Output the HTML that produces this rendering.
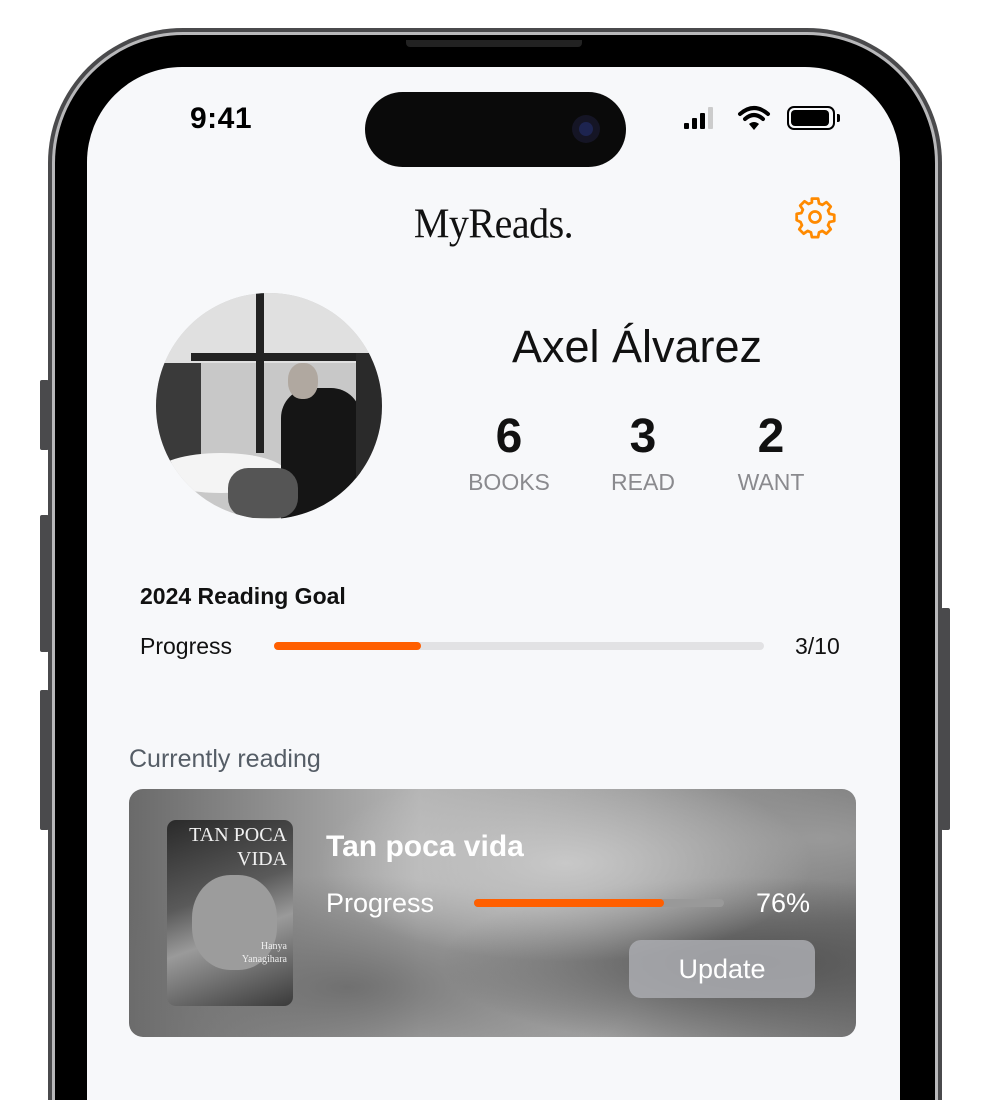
<!DOCTYPE html>
<html><head><meta charset="utf-8"><style>
*{margin:0;padding:0;box-sizing:border-box}
html,body{width:990px;height:1100px;overflow:hidden;background:#fff}
body{font-family:"Liberation Sans",sans-serif}
#wrap{position:relative;width:990px;height:1100px;overflow:hidden}
.abs{position:absolute}
.frame{left:48px;top:28px;width:894px;height:1072px;border-radius:135px 135px 0 0;background:#4a4a4c;}
.frame2{left:52px;top:32px;width:886px;height:1068px;border-radius:131px 131px 0 0;background:#b8b8ba;}
.frame3{left:55px;top:35px;width:880px;height:1065px;border-radius:128px 128px 0 0;background:#000;}
.screen{left:87px;top:67px;width:813px;height:1033px;border-radius:95px 95px 0 0;background:#f7f8fa;overflow:hidden}
.btn{background:#4a4a4c;border-radius:2px}
</style></head><body><div id="wrap">
<div class="abs btn" style="left:40px;top:380px;width:9px;height:70px"></div>
<div class="abs btn" style="left:40px;top:515px;width:9px;height:137px"></div>
<div class="abs btn" style="left:40px;top:690px;width:9px;height:140px"></div>
<div class="abs btn" style="left:941px;top:608px;width:9px;height:222px"></div>
<div class="abs frame"></div>
<div class="abs frame2"></div>
<div class="abs frame3"></div>
<div class="abs" style="left:406px;top:40px;width:176px;height:7px;background:#222;border-radius:0 0 4px 4px"></div>
<div class="abs screen">
  <div class="abs" style="left:103px;top:35px;font-size:30px;font-weight:bold;color:#000;letter-spacing:0.5px">9:41</div>
  <div class="abs" style="left:278px;top:25px;width:261px;height:75px;background:#0a0a0a;border-radius:38px">
    <div class="abs" style="left:207px;top:23px;width:28px;height:28px;border-radius:50%;background:#151525"><div class="abs" style="left:7px;top:7px;width:14px;height:14px;border-radius:50%;background:#1d2450"></div></div>
  </div>
  <div class="abs" style="left:597px;top:56px;width:5px;height:6px;background:#000;border-radius:1px"></div>
  <div class="abs" style="left:605px;top:51px;width:5px;height:11px;background:#000;border-radius:1px"></div>
  <div class="abs" style="left:613px;top:46px;width:5px;height:16px;background:#000;border-radius:1px"></div>
  <div class="abs" style="left:621px;top:40px;width:5px;height:22px;background:#ccc;border-radius:1px"></div>
  <svg class="abs" style="left:650px;top:38px" width="34" height="26" viewBox="0 0 34 26"><path d="M3 9 Q17 -3 31 9" stroke="#000" stroke-width="4" fill="none" stroke-linecap="round"/><path d="M8 14 Q17 6 26 14" stroke="#000" stroke-width="4" fill="none" stroke-linecap="round"/><path d="M12 19 L17 25 L22 19 Q17 15 12 19Z" fill="#000"/></svg>
  <div class="abs" style="left:700px;top:39px;width:48px;height:24px;border:2px solid #000;border-radius:7px"><div class="abs" style="left:2px;top:2px;width:38px;height:16px;background:#000;border-radius:4px"></div></div>
  <div class="abs" style="left:750px;top:47px;width:3px;height:8px;background:#000;border-radius:0 2px 2px 0"></div>
  <div class="abs" style="left:0;width:813px;top:133px;text-align:center;font-family:'Liberation Serif',serif;font-size:40px;color:#111;letter-spacing:-0.5px;transform:scaleY(1.05)">MyReads.</div>
  <svg class="abs" style="left:706px;top:128px" width="44" height="44" viewBox="0 0 24 24" fill="none" stroke="#ff8a00" stroke-width="1.5" stroke-linejoin="round"><path d="M10.3 2h3.4l.5 2.6 1.8.8 2.2-1.5 2.4 2.4-1.5 2.2.8 1.8 2.6.5v3.4l-2.6.5-.8 1.8 1.5 2.2-2.4 2.4-2.2-1.5-1.8.8-.5 2.6h-3.4l-.5-2.6-1.8-.8-2.2 1.5-2.4-2.4 1.5-2.2-.8-1.8L2 13.7v-3.4l2.6-.5.8-1.8-1.5-2.2 2.4-2.4 2.2 1.5 1.8-.8z"/><circle cx="12" cy="12" r="3"/></svg>
  <div class="abs" style="left:69px;top:226px;width:226px;height:226px;border-radius:50%;overflow:hidden;background:#c8c8c8">
    <div class="abs" style="left:0;top:0;width:226px;height:70px;background:#e0e0e0"></div>
    <div class="abs" style="left:35px;top:60px;width:180px;height:8px;background:#222"></div>
    <div class="abs" style="left:100px;top:0;width:8px;height:160px;background:#222"></div>
    <div class="abs" style="left:0;top:70px;width:45px;height:100px;background:#3a3a3a"></div>
    <div class="abs" style="left:0;top:160px;width:130px;height:40px;background:#f4f4f4;border-radius:50%"></div>
    <div class="abs" style="left:125px;top:95px;width:80px;height:140px;background:#151515;border-radius:30px 30px 0 0"></div>
    <div class="abs" style="left:132px;top:70px;width:30px;height:36px;background:#b0a8a0;border-radius:45%"></div>
    <div class="abs" style="left:72px;top:175px;width:70px;height:50px;background:#555;border-radius:20px"></div>
    <div class="abs" style="left:200px;top:60px;width:26px;height:150px;background:#2a2a2a"></div>
  </div>
  <div class="abs" style="left:380px;top:254px;width:340px;text-align:center;font-size:45px;color:#111">Axel Álvarez</div>
  <div class="abs" style="left:362px;top:342px;width:120px;text-align:center;font-size:48px;font-weight:bold;color:#111">6</div>
  <div class="abs" style="left:496px;top:342px;width:120px;text-align:center;font-size:48px;font-weight:bold;color:#111">3</div>
  <div class="abs" style="left:624px;top:342px;width:120px;text-align:center;font-size:48px;font-weight:bold;color:#111">2</div>
  <div class="abs" style="left:362px;top:402px;width:120px;text-align:center;font-size:23px;color:#8a8a8e">BOOKS</div>
  <div class="abs" style="left:496px;top:402px;width:120px;text-align:center;font-size:23px;color:#8a8a8e">READ</div>
  <div class="abs" style="left:624px;top:402px;width:120px;text-align:center;font-size:23px;color:#8a8a8e">WANT</div>
  <div class="abs" style="left:53px;top:516px;font-size:23px;font-weight:bold;color:#111">2024 Reading Goal</div>
  <div class="abs" style="left:53px;top:566px;font-size:23px;color:#111">Progress</div>
  <div class="abs" style="left:187px;top:575px;width:490px;height:8px;background:#e2e2e4;border-radius:4px"><div style="width:147px;height:8px;background:#ff5f00;border-radius:4px"></div></div>
  <div class="abs" style="left:708px;top:566px;font-size:23px;color:#111">3/10</div>
  <div class="abs" style="left:42px;top:678px;font-size:25px;color:#555d66">Currently reading</div>
  <div class="abs" style="left:42px;top:722px;width:727px;height:248px;border-radius:14px;overflow:hidden;background:radial-gradient(ellipse at 60% 30%,#c8c8c8,transparent 40%),radial-gradient(ellipse at 85% 70%,#505050,transparent 35%),radial-gradient(ellipse at 30% 80%,#707070,transparent 40%),radial-gradient(ellipse at 95% 20%,#999,transparent 30%),linear-gradient(90deg,#6a6a6a,#b5b5b5 40%,#9a9a9a 70%,#777)">
    <div class="abs" style="left:38px;top:31px;width:126px;height:186px;border-radius:9px;background:linear-gradient(160deg,#2a2a2a,#5a5a5a 40%,#9a9a9a 60%,#3a3a3a);overflow:hidden">
      <div class="abs" style="left:25px;top:55px;width:85px;height:95px;border-radius:45%;background:#9c9c9c"></div>
      <div class="abs" style="left:10px;top:3px;width:110px;text-align:right;font-family:'Liberation Serif',serif;color:#f0f0f0;font-size:20px;line-height:24px">TAN POCA<br>VIDA</div>
      <div class="abs" style="left:60px;top:120px;width:60px;text-align:right;font-family:'Liberation Serif',serif;color:#eee;font-size:10px;line-height:13px">Hanya<br>Yanagihara</div>
    </div>
    <div class="abs" style="left:197px;top:41px;font-size:30px;font-weight:bold;color:#fff">Tan poca vida</div>
    <div class="abs" style="left:197px;top:99px;font-size:27px;color:#fff">Progress</div>
    <div class="abs" style="left:345px;top:110px;width:250px;height:8px;background:#999;border-radius:4px"><div style="width:190px;height:8px;background:#ff5f00;border-radius:4px"></div></div>
    <div class="abs" style="left:627px;top:99px;font-size:27px;color:#fff">76%</div>
    <div class="abs" style="left:500px;top:151px;width:186px;height:58px;border-radius:12px;background:rgba(170,172,176,0.85);color:#fff;font-size:27px;text-align:center;line-height:58px">Update</div>
  </div>
</div>
</div></body></html>
